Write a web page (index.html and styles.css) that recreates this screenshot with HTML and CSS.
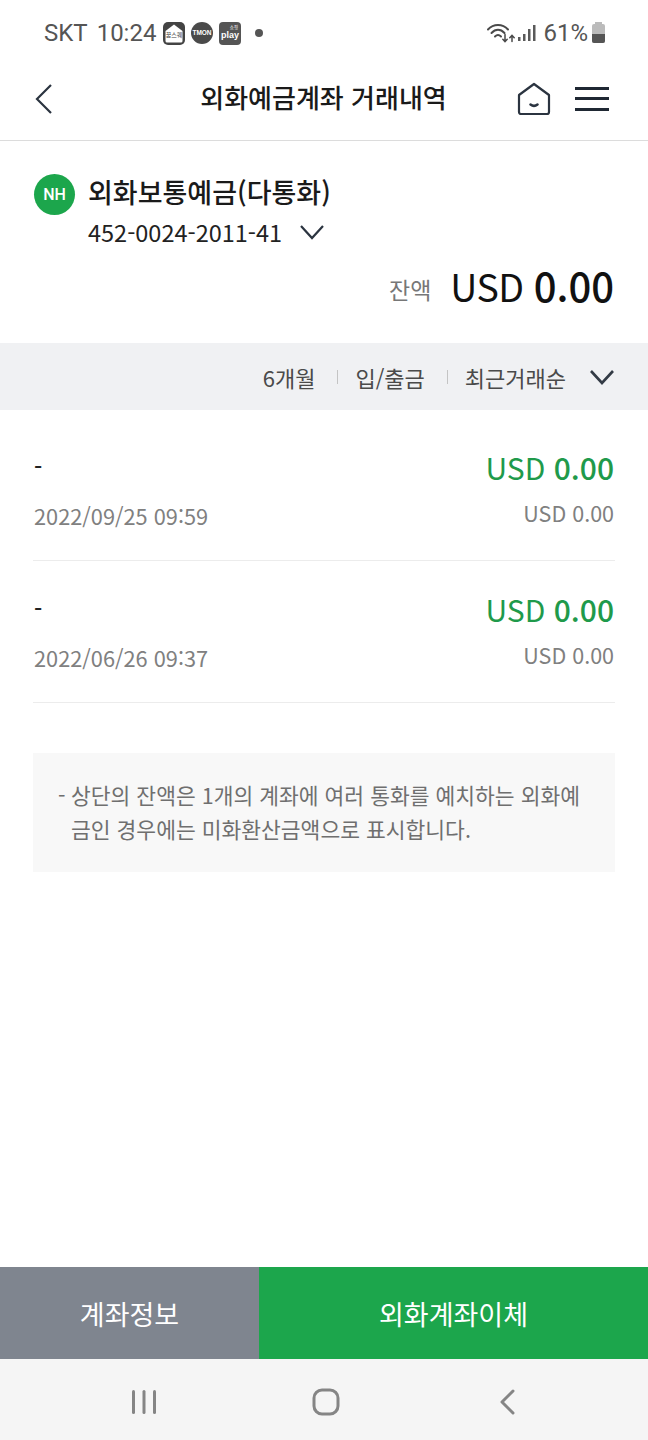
FILE: index.html
```html
<!DOCTYPE html>
<html lang="ko">
<head>
    <meta charset="UTF-8">
    <meta name="viewport" content="width=device-width, initial-scale=1.0">
    <title>외화예금계좌 거래내역</title>
    <link rel="stylesheet" href="styles.css">
</head>
<body>
    <div class="phone">
        <!-- status bar -->
        <div class="status-bar">
            <div class="status-left">
                <span class="carrier">SKT</span>
                <span class="clock">10:24</span>
                <svg class="app-icon" width="22" height="23" viewBox="0 0 22 23"><rect width="22" height="23" rx="5" fill="#444"/><path d="M2.500 9 11 2.500 19.500 9V19a1.500 1.500 0 0 1-1.500 1.500H4A1.500 1.500 0 0 1 2.500 19Z" fill="#fff"/><text x="11" y="15" font-size="6" text-anchor="middle" fill="#444">꿈스퀘</text></svg>
                <svg class="app-icon" width="22" height="22" viewBox="0 0 22 22"><circle cx="11" cy="11" r="11" fill="#4a4a4a"/><text x="11" y="13" font-size="6.500" font-weight="700" text-anchor="middle" fill="#fff">TMON</text></svg>
                <svg class="app-icon" width="22" height="23" viewBox="0 0 22 23"><rect width="22" height="23" rx="4" fill="#555"/><text x="15" y="7" font-size="4.500" text-anchor="middle" fill="#fff">쇼핑</text><text x="11" y="16" font-size="9" font-weight="700" text-anchor="middle" fill="#fff">play</text></svg>
                <span class="status-dot"></span>
            </div>
            <div class="status-right">
                <svg class="wifi" width="28" height="20" viewBox="0 0 28 20" fill="none" stroke="#4a4a4a" stroke-linecap="round">
                    <path d="M1 6.500C6.500 .500 15.500 .500 21 6.500" stroke-width="2"/>
                    <path d="M4.500 10C8.500 5.800 13.500 5.800 17.500 10" stroke-width="2"/>
                    <path d="M8 13.500C10 11.500 12 11.500 14 13.500" stroke-width="2"/>
                    <path d="M18 11.500V18.500M15.800 16.300l2.200 2.400 2.200-2.400" stroke-width="1.500"/>
                    <path d="M25 18.500V12.500M22.800 14.700l2.200-2.400 2.200 2.400" stroke-width="1.500"/>
                </svg>
                <svg class="signal" width="18" height="18" viewBox="0 0 18 18" fill="#5a5a5a"><rect x="0" y="13" width="2.500" height="4"/><rect x="5" y="10" width="2.500" height="7"/><rect x="10" y="5" width="2.500" height="12"/><rect x="15" y="1" width="2.500" height="16"/></svg>
                <span class="battery-text">61%</span>
                <span class="battery"><span class="battery-fill"></span></span>
            </div>
        </div>

        <!-- header -->
        <header class="header">
            <svg class="back" width="20" height="32" viewBox="0 0 20 32" fill="none" stroke="#2b3440" stroke-width="2.200"><path d="M17 2 3 16l14 14"/></svg>
            <h1>외화예금계좌 거래내역</h1>
            <div class="header-icons">
                <svg width="34" height="34" viewBox="0 0 34 34" fill="none" stroke="#2b3440" stroke-width="2.200" stroke-linejoin="round"><path d="M2 13 17 2l15 11v17a2 2 0 0 1-2 2H4a2 2 0 0 1-2-2Z"/><path d="M13.500 22.500c2 1.500 5 1.500 7 0" stroke-linecap="round" stroke-width="2.600"/></svg>
                <div class="menu"><span></span><span></span><span></span></div>
            </div>
        </header>

        <!-- account -->
        <section class="account">
            <div class="account-top">
                <div class="nh-logo">NH</div>
                <div>
                    <div class="account-name">외화보통예금(다통화)</div>
                    <div class="account-number">452-0024-2011-41
                        <svg width="26" height="16" viewBox="0 0 26 16" fill="none" stroke="#2b3440" stroke-width="2.200"><path d="M2 2l11 12L24 2"/></svg>
                    </div>
                </div>
            </div>
            <div class="balance">
                <span class="balance-label">잔액</span>
                <span class="balance-value">USD <b>0.00</b></span>
            </div>
        </section>

        <!-- filter -->
        <div class="filter-bar">
            <span>6개월</span>
            <i class="sep"></i>
            <span>입/출금</span>
            <i class="sep"></i>
            <span>최근거래순</span>
            <svg width="26" height="16" viewBox="0 0 26 16" fill="none" stroke="#333b45" stroke-width="2.600"><path d="M2 2l11 12L24 2"/></svg>
        </div>

        <!-- transactions -->
        <div class="tx-list">
            <div class="tx-row">
                <div class="tx-left">
                    <div class="tx-name">-</div>
                    <div class="tx-date">2022/09/25 09:59</div>
                </div>
                <div class="tx-right">
                    <div class="tx-amount">USD <b>0.00</b></div>
                    <div class="tx-balance">USD 0.00</div>
                </div>
            </div>
            <div class="tx-row">
                <div class="tx-left">
                    <div class="tx-name">-</div>
                    <div class="tx-date">2022/06/26 09:37</div>
                </div>
                <div class="tx-right">
                    <div class="tx-amount">USD <b>0.00</b></div>
                    <div class="tx-balance">USD 0.00</div>
                </div>
            </div>
        </div>

        <div class="notice">
            <span class="notice-dash">-</span>
            <p>상단의 잔액은 1개의 계좌에 여러 통화를 예치하는 외화예금인 경우에는 미화환산금액으로 표시합니다.</p>
        </div>

        <div class="spacer"></div>

        <div class="bottom-buttons">
            <button class="btn-info">계좌정보</button>
            <button class="btn-transfer">외화계좌이체</button>
        </div>

        <!-- android nav -->
        <div class="nav-bar">
            <svg width="26" height="26" viewBox="0 0 26 26" fill="#858585"><rect x="1" y="1" width="3" height="24" rx="1.500"/><rect x="11.500" y="1" width="3" height="24" rx="1.500"/><rect x="22" y="1" width="3" height="24" rx="1.500"/></svg>
            <svg class="nav-home" width="28" height="28" viewBox="0 0 28 28" fill="none" stroke="#858585" stroke-width="3"><rect x="2" y="2" width="24" height="24" rx="8"/></svg>
            <svg width="16" height="26" viewBox="0 0 16 26" fill="none" stroke="#858585" stroke-width="3" stroke-linecap="round" stroke-linejoin="round"><path d="M14 2 3 13l11 11"/></svg>
        </div>
    </div>
</body>
</html>
```

FILE: styles.css
```css
* {
    box-sizing: border-box;
}
body {
    margin: 0;
    padding: 0;
    background-color: #fff;
    font-family: "Noto Sans CJK KR", "Noto Sans", sans-serif;
    color: #1a1a1a;
}
.phone {
    width: 648px;
    height: 1440px;
    display: flex;
    flex-direction: column;
    overflow: hidden;
}

/* status bar */
.status-bar {
    height: 66px;
    padding: 0 43px 0 44px;
    display: flex;
    justify-content: space-between;
    align-items: center;
    color: #555;
    font-family: Roboto, sans-serif;
    font-size: 24px;
}
.status-left, .status-right {
    display: flex;
    align-items: center;
}
.carrier {
    margin-right: 9px;
}
.clock {
    margin-right: 7px;
}
.app-icon {
    margin-right: 6px;
    font-family: "Liberation Sans", "Noto Sans CJK KR", sans-serif;
}
.status-dot {
    width: 8px;
    height: 8px;
    margin-left: 8px;
    border-radius: 50%;
    background-color: #555;
}
.wifi {
    margin-right: 3px;
}
.signal {
    margin-right: 7px;
}
.battery {
    position: relative;
    width: 13px;
    height: 19px;
    margin-left: 4px;
    border-radius: 2px;
    background-color: #bbb;
}
.battery::before {
    content: "";
    position: absolute;
    left: 3px;
    top: -2px;
    width: 7px;
    height: 2px;
    background-color: #bbb;
}
.battery-fill {
    position: absolute;
    left: 0;
    right: 0;
    bottom: 0;
    height: 9px;
    border-radius: 0 0 2px 2px;
    background-color: #555;
}

/* header */
.header {
    height: 75px;
    padding: 0 39px 9px 34px;
    display: flex;
    align-items: center;
    justify-content: space-between;
    border-bottom: 1px solid #dcdcdc;
}
.header h1 {
    margin: 0 0 3px 76px;
    font-size: 26px;
    font-weight: 500;
    line-height: 1;
    white-space: nowrap;
    color: #1a1a1a;
}
.header-icons {
    display: flex;
    align-items: center;
    gap: 24px;
}
.menu {
    width: 34px;
    height: 24px;
    display: flex;
    flex-direction: column;
    justify-content: space-between;
}
.menu span {
    height: 3px;
    background-color: #1f2833;
}

/* account */
.account {
    height: 202px;
    padding: 30px 34px 0;
}
.account-top {
    display: flex;
    gap: 13px;
}
.nh-logo {
    width: 41px;
    height: 41px;
    margin-top: 3px;
    border-radius: 50%;
    background-color: #1ca64c;
    color: #fff;
    font-family: Roboto, sans-serif;
    font-size: 16px;
    font-weight: 500;
    line-height: 41px;
    text-align: center;
}
.account-name {
    font-size: 27px;
    line-height: 42px;
    white-space: nowrap;
    font-weight: 500;
}
.account-number {
    display: flex;
    align-items: center;
    gap: 17px;
    margin-top: -2px;
    font-size: 23.500px;
    line-height: 42px;
    color: #222;
}
.balance {
    display: flex;
    justify-content: flex-end;
    align-items: center;
    margin-top: 8px;
}
.balance-label {
    margin-right: 19px;
    font-size: 23px;
    color: #777;
    padding-top: 6px;
}
.balance-value {
    font-size: 37.500px;
    letter-spacing: -0.500px;
    line-height: 48px;
    color: #111;
    white-space: nowrap;
}
.balance-value b {
    font-size: 40px;
    font-weight: 500;
    letter-spacing: 0;
}

/* filter */
.filter-bar {
    height: 67px;
    padding: 0 33px 0 0;
    display: flex;
    justify-content: flex-end;
    align-items: center;
    background-color: #f0f1f3;
    font-size: 22px;
    color: #4a4a4a;
}
.sep {
    width: 1px;
    height: 14px;
    margin: 0 17px 0 22px;
    background-color: #c4c4c4;
}
.filter-bar svg {
    margin-left: 23px;
}

/* transactions */
.tx-list {
    padding: 0 33px;
}
.tx-row {
    height: 142px;
    padding-top: 27px;
    display: flex;
    justify-content: space-between;
    border-bottom: 1px solid #ececec;
}
.tx-row:first-child {
    height: 151px;
    padding-top: 36px;
}
.tx-left {
    padding-left: 1px;
}
.tx-name {
    font-size: 23px;
    font-weight: 500;
    line-height: 40px;
    color: #222;
}
.tx-date {
    margin-top: 10px;
    font-size: 21.750px;
    line-height: 40px;
    color: #808080;
    white-space: nowrap;
}
.tx-right {
    padding-right: 1px;
    text-align: right;
    margin-top: -1px;
}
.tx-amount {
    font-size: 30px;
    line-height: 44px;
    color: #1f9a4b;
    white-space: nowrap;
}
.tx-amount b {
    font-weight: 500;
}
.tx-balance {
    margin-top: 4px;
    font-size: 21.500px;
    line-height: 40px;
    color: #808080;
    white-space: nowrap;
}

/* notice */
.notice {
    height: 119px;
    margin: 50px 33px 0;
    padding: 25px 30px 0 25px;
    display: flex;
    background-color: #f8f8f8;
    font-size: 21.500px;
    line-height: 34px;
    color: #6f6f6f;
}
.notice-dash {
    flex: none;
    width: 13px;
}
.notice p {
    margin: 0;
    word-break: break-all;
}

.spacer {
    flex: 1;
}

/* bottom buttons */
.bottom-buttons {
    height: 92px;
    display: flex;
}
.bottom-buttons button {
    border: none;
    padding: 0;
    color: #fff;
    font-family: inherit;
    font-size: 27px;
}
.btn-info {
    width: 259px;
    background-color: #7f858f;
}
.btn-transfer {
    flex: 1;
    background-color: #1ca64c;
}

/* nav bar */
.nav-bar {
    height: 81px;
    padding: 4px 133px 0 131px;
    display: flex;
    justify-content: space-between;
    align-items: center;
    background-color: #f5f5f5;
}
.nav-home {
    margin-right: 4px;
}
```
